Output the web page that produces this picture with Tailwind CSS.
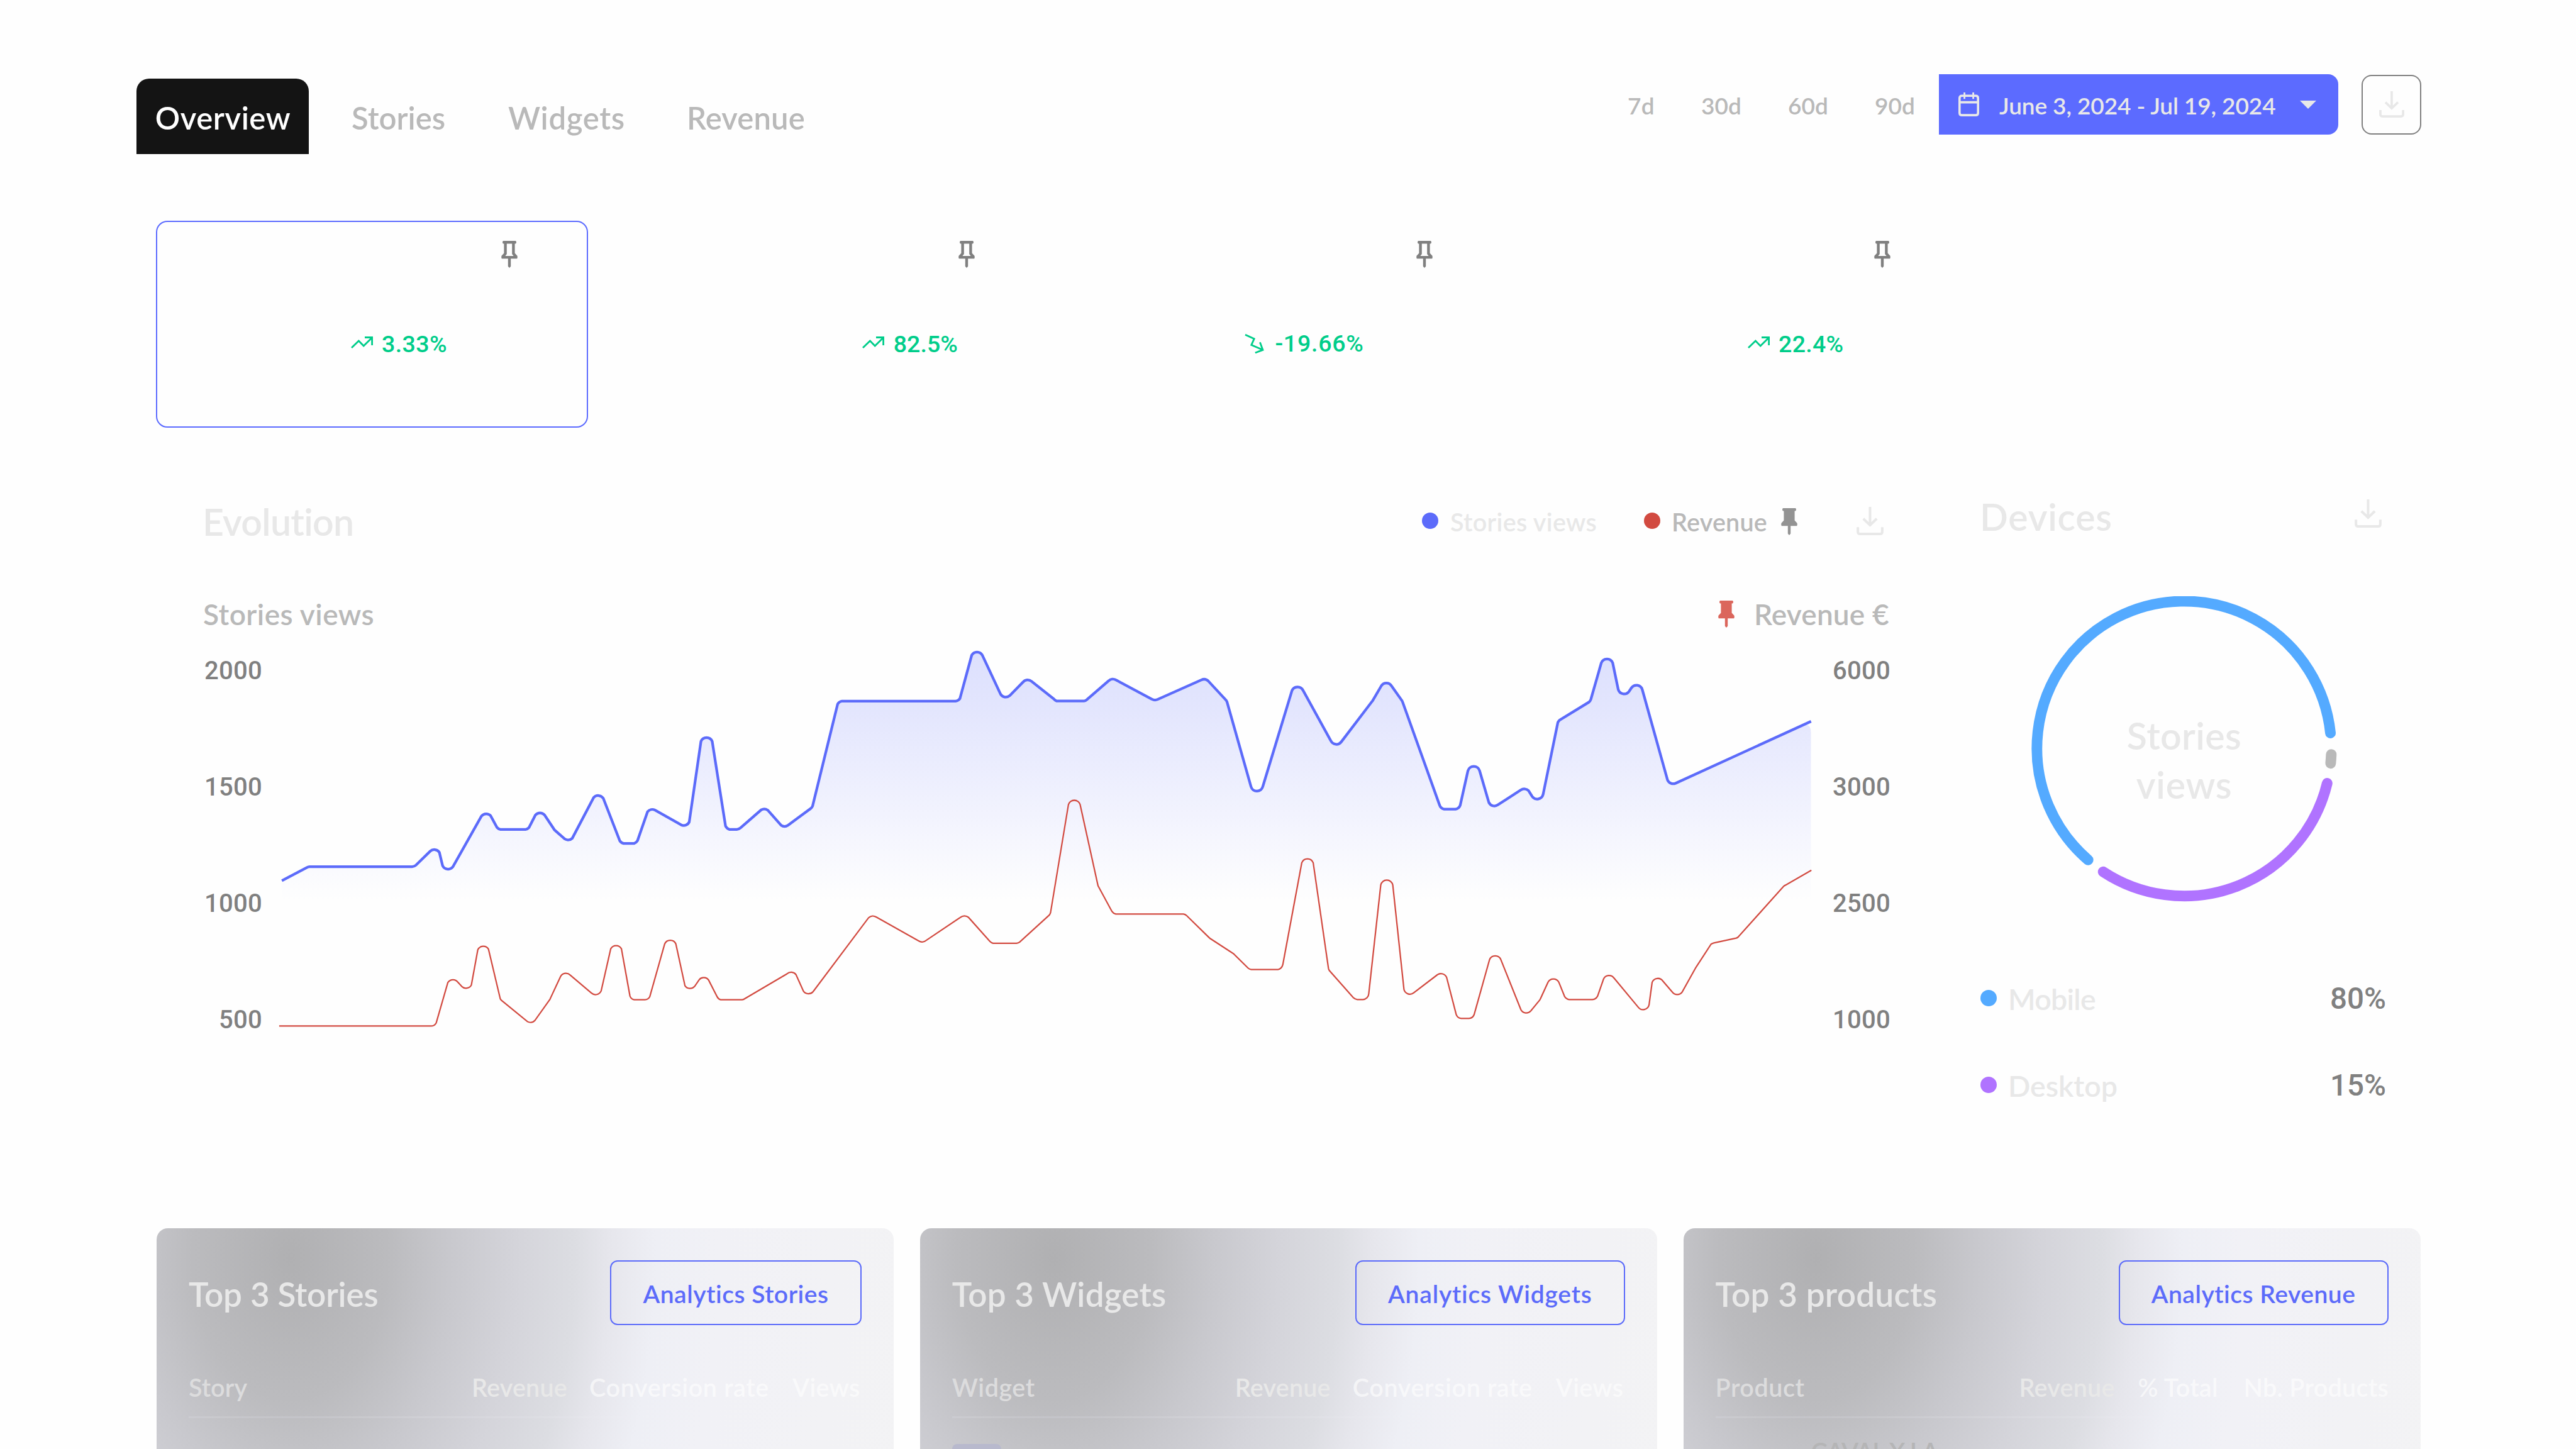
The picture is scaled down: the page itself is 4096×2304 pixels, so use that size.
<!DOCTYPE html>
<html lang="en">
<head>
<meta charset="utf-8">
<title>Analytics overview</title>
<script src="https://cdn.jsdelivr.net/npm/@tailwindcss/browser@4"></script>
</head>
<body class="w-[4096px] h-[2304px] overflow-hidden bg-[#fefefe] font-['Lato',sans-serif] font-semibold whitespace-nowrap">

<!-- icon sprite -->
<svg class="hidden">
  <symbol id="pin" viewBox="0 0 25.6 43"><path fill="currentColor" fill-rule="evenodd" d="M2.8 0H22.8Q23.8 1 23.8 2.3T22.8 4.6H21.4V19.6L25.3 23.7Q25.6 25 25.6 26T25 28.3H15V40.5L12.8 43 10.6 40.5V28.3H.6Q0 27 0 26T.3 23.7L4.2 19.6V4.6H2.8Q1.8 3.6 1.8 2.3T2.8 0ZM8.6 4.6V21L6.2 23.9H19.4L17 21V4.6Z"/></symbol>
  <symbol id="pin-solid" viewBox="0 0 25.6 43"><path fill="currentColor" d="M2.8 0H22.8Q23.8 1 23.8 2.3T22.8 4.6H21.4V19.6L25.3 23.7Q25.6 25 25.6 26T25 28.3H15V40.5L12.8 43 10.6 40.5V28.3H.6Q0 27 0 26T.3 23.7L4.2 19.6V4.6H2.8Q1.8 3.6 1.8 2.3T2.8 0Z"/></symbol>
  <symbol id="download" viewBox="0 0 42.7 45"><path fill="none" stroke="currentColor" stroke-width="4" d="M21.3 0V29M10.6 18.8L21.3 29 32 18.8M2 32.2V39.5Q2 43 5.5 43H37.2Q40.7 43 40.7 39.5V32.2"/></symbol>
  <symbol id="up" viewBox="0 0 35 19"><path fill="none" stroke="currentColor" stroke-width="2.8" d="M1 18L12.4 7 20.2 15 33.4 2M22 1.5H33.6V14"/></symbol>
  <symbol id="down" viewBox="0 0 31 31"><path fill="none" stroke="currentColor" stroke-width="2.8" d="M1 1.2L15.2 7.6 10.8 17.6 28.8 25.2M24.4 13.3L29 25.4 16.8 30"/></symbol>
  <symbol id="calendar" viewBox="0 0 33 38"><path fill="none" stroke="currentColor" stroke-width="3.6" d="M5.5 5.3H27.5Q31.2 5.3 31.2 9V32.4Q31.2 36.1 27.5 36.1H5.5Q1.8 36.1 1.8 32.4V9Q1.8 5.3 5.5 5.3ZM1.8 15.6H31.2"/><path stroke="currentColor" stroke-width="2.8" d="M9.6 0V10.2M23.6 0V10.2"/></symbol>
</svg>

<!-- top bar -->
<header class="flex items-start h-[245px] pt-[118px] pl-[217px]">
  <nav class="flex h-[120px] mt-[7px] text-[49px] text-[#b9b9b9]">
    <a class="flex items-center justify-center w-[274px] pt-[5px] pl-[1px] rounded-t-[20px] bg-[#141414] text-white tracking-[0.012em]">Overview</a>
    <a class="flex items-center w-[249px] pt-[5px] ml-[68px] tracking-[0.001em]">Stories</a>
    <a class="flex items-center w-[284px] pt-[5px] tracking-[0.014em]">Widgets</a>
    <a class="flex items-center w-[189px] pt-[5px] tracking-[0.003em]">Revenue</a>
  </nav>
  <div class="flex items-center h-[96px] ml-[1307px] text-[37px] text-[#b9b9b9]">
    <span class="w-[117px] pt-[3px] tracking-[0.01em]">7d</span>
    <span class="w-[138px] pt-[3px]">30d</span>
    <span class="w-[138px] pt-[3px]">60d</span>
    <span class="w-[102px] pt-[3px]">90d</span>
    <button class="flex items-center w-[635px] h-[96px] pl-[31px] rounded-r-2xl bg-[#5c6bff] text-[#e8e8e8]">
      <svg class="w-[33px] h-[38px]"><use href="#calendar"/></svg>
      <span class="ml-[32px] w-[445px] pt-[3px] text-left tracking-[-0.003em]">June 3, 2024 - Jul 19, 2024</span>
      <svg class="w-[26px] h-[13px] ml-[33px]" viewBox="0 0 26 13"><path fill="currentColor" d="M0 0H26L13 13Z"/></svg>
    </button>
    <button class="flex items-center justify-center w-[95px] h-[95px] ml-[37px] rounded-2xl border-[2.4px] border-[#808080] text-[#e8e8e8]">
      <svg class="w-[40px] h-[42px]"><use href="#download"/></svg>
    </button>
  </div>
</header>

<!-- metric tiles -->
<section class="grid grid-cols-[repeat(4,687px)] gap-x-[40.7px] mt-[106px] ml-[248px] h-[329px] text-[37.5px] font-medium font-['Roboto',sans-serif]">
  <div class="rounded-[18px] border-2 border-[#5c6bff] pt-[30px] pl-[308px]">
    <svg class="w-[26px] h-[43px] ml-[239px] text-[#808080]"><use href="#pin"/></svg>
    <div class="flex items-center h-[44px] mt-[99px] text-[#00cd8a]"><svg class="w-[35px] h-[19px] mt-[-5px]"><use href="#up"/></svg><span class="ml-[14px] tracking-[0.011em]">3.33%</span></div>
  </div>
  <div class="pt-[32px] pl-[395px]">
    <svg class="w-[26px] h-[43px] ml-[153px] text-[#808080]"><use href="#pin"/></svg>
    <div class="flex items-center h-[44px] mt-[99px] text-[#00cd8a]"><svg class="w-[35px] h-[19px] mt-[-5px]"><use href="#up"/></svg><span class="ml-[15px] tracking-[0.002em]">82.5%</span></div>
  </div>
  <div class="pt-[32px] pl-[276px]">
    <svg class="w-[26px] h-[43px] ml-[273px] text-[#808080]"><use href="#pin"/></svg>
    <div class="flex items-center h-[44px] mt-[98px] text-[#00cd8a]"><svg class="w-[31px] h-[31px]"><use href="#down"/></svg><span class="ml-[17px] tracking-[0.02em]">-19.66%</span></div>
  </div>
  <div class="pt-[32px] pl-[348px]">
    <svg class="w-[26px] h-[43px] ml-[201px] text-[#808080]"><use href="#pin"/></svg>
    <div class="flex items-center h-[44px] mt-[99px] text-[#00cd8a]"><svg class="w-[35px] h-[19px] mt-[-5px]"><use href="#up"/></svg><span class="ml-[14px] tracking-[0.007em]">22.4%</span></div>
  </div>
</section>

<main class="flex mt-[90px] ml-[322px] h-[1183px]">
  <!-- evolution chart -->
  <section class="w-[2684px] pt-[8px]">
    <div class="flex items-center h-[100px] text-[39.5px]">
      <h2 class="flex-1 pt-[4px] text-[59px] text-[#e8e8e8] tracking-[-0.012em]">Evolution</h2>
      <i class="size-[26px] rounded-full bg-[#5c6bfa]"></i>
      <span class="w-[308px] pt-[3px] ml-[19px] text-[#e8e8e8] tracking-[0.009em]">Stories views</span>
      <i class="size-[26px] rounded-full bg-[#d24a40]"></i>
      <span class="w-[155px] pt-[3px] ml-[18px] text-[#b9b9b9] tracking-[0.005em]">Revenue</span>
      <svg class="w-[26px] h-[43px] mt-[3px] ml-[19px] text-[#939393]"><use href="#pin-solid"/></svg>
      <svg class="w-[43px] h-[45px] mt-[1px] ml-[94px] mr-[11px] text-[#e8e8e8]"><use href="#download"/></svg>
    </div>
    <div class="flex items-center h-[70px] mt-[62px] text-[46px] text-[#b9b9b9]">
      <span class="flex-1 pt-[2px] pl-[1px] tracking-[0.01em]">Stories views</span>
      <svg class="w-[26px] h-[43px] mt-[3px] text-[#db665c]"><use href="#pin-solid"/></svg>
      <span class="w-[217px] pt-[2px] ml-[31px] tracking-[0.003em]">Revenue €</span>
    </div>
    <div class="flex text-[40px] leading-[60px] text-[#808080] font-medium font-['Roboto',sans-serif] tracking-[0.007em]">
      <div class="flex flex-col justify-between items-end w-[95px] h-[615px] mt-[27px]"><span>2000</span><span>1500</span><span>1000</span><span>500</span></div>
      <svg id="chart" class="w-[2480px] h-[640px] ml-[13px]" viewBox="839.84 1972.66 4843.75 1250" fill="none">
        <defs><linearGradient id="fade" gradientUnits="userSpaceOnUse" x1="0" y1="2010" x2="0" y2="2800"><stop stop-color="#5c6bfa" stop-opacity=".21"/><stop offset=".25" stop-color="#5c6bfa" stop-opacity=".165"/><stop offset="1" stop-color="#5c6bfa" stop-opacity="0"/></linearGradient></defs>
        <path id="area" fill="url(#fade)"/>
        <path id="views" stroke="#5c6bfa" stroke-width="8.3"/>
        <path id="revenue" stroke="#d24a40" stroke-width="4.4"/>
      </svg>
      <div class="flex flex-col justify-between items-end w-[96px] h-[615px] mt-[27px]"><span>6000</span><span>3000</span><span>2500</span><span>1000</span></div>
    </div>
  </section>

  <!-- devices -->
  <section class="w-[646px] ml-[142px]">
    <div class="flex items-center justify-between h-[100px]">
      <h2 class="pt-[5px] text-[59px] text-[#e8e8e8] tracking-[0.013em]">Devices</h2>
      <svg class="w-[43px] h-[45px] mt-[-8px] mr-[7px] text-[#e8e8e8]"><use href="#download"/></svg>
    </div>
    <div class="relative w-[486px] h-[486px] mt-[78px] ml-[82px]">
      <svg class="size-full" viewBox="6309.4 1851.1 949.2 949.2" fill="none" stroke-width="33" stroke-linecap="round">
        <path stroke="#54aaff" d="M6485.6 2670A457 457 0 1 1 7238.2 2276"/>
        <path stroke="#b9b9b9" d="M7240.7 2342.5A457 457 0 0 1 7238.8 2370"/>
        <path stroke="#b073ff" d="M7228 2432A457 457 0 0 1 6532.5 2707"/>
      </svg>
      <p class="absolute inset-0 pt-[183px] text-center text-[59px] leading-[77.7px] text-[#e8e8e8]"><span class="tracking-[0.007em]">Stories</span><br><span class="tracking-[0.013em]">views</span></p>
    </div>
    <div class="flex items-center h-[60px] mt-[123px] text-[46.5px] text-[#e8e8e8]">
      <i class="size-[26px] ml-px rounded-full bg-[#54aaff]"></i><span class="flex-1 pt-[3px] ml-[18px] tracking-[-0.015em]">Mobile</span>
      <span class="mt-[4px] text-[47.5px] text-[#808080] font-medium font-['Roboto',sans-serif]">80%</span>
    </div>
    <div class="flex items-center h-[60px] mt-[78px] text-[46.5px] text-[#e8e8e8]">
      <i class="size-[26px] ml-px rounded-full bg-[#b073ff]"></i><span class="flex-1 pt-[3px] ml-[18px]">Desktop</span>
      <span class="mt-[4px] text-[47.5px] text-[#808080] font-medium font-['Roboto',sans-serif]">15%</span>
    </div>
  </section>
</main>

<!-- top 3 lists -->
<section class="grid grid-cols-[repeat(3,1172px)] gap-x-[41.8px] ml-[249px] h-[370px] text-[39.5px] text-white/60">
  <article class="rounded-t-[18px] pt-[51px] px-[51px] bg-[radial-gradient(ellipse_620px_900px_at_212px_48px,#b0b0b2_0%,#bbbbbe_25%,#c8c8cd_41%,#d4d4da_58%,#dcdde2_73%,#e6e6ec_82%,#eeeff5_94%,#f1f1f6_110%,#f3f3f4_170%)]">
    <div class="flex items-center justify-between h-[103px]">
      <h3 class="pt-[4px] text-[53px] text-[#e8e8e8] tracking-[-0.003em]">Top 3 Stories</h3>
      <button class="w-[400px] h-[103px] pt-[3px] rounded-xl border-2 border-[#5c6bfa] text-[39px] text-[#5c6bfa] tracking-[0.014em]">Analytics Stories</button>
    </div>
    <div class="flex items-center h-[99px] pt-[4px] mt-[49px] border-b-3 border-[#f3f3f8]/15">
      <span class="flex-1 text-[#dcdcdd] tracking-[0.002em]">Story</span>
      <span class="w-[187px] text-[#e8e8e8] tracking-[0.005em]">Revenue</span>
      <span class="w-[323px] tracking-[0.016em]">Conversion rate</span>
      <span class="w-[110px] tracking-[0.007em]">Views</span>
    </div>
  </article>
  <article class="rounded-t-[18px] pt-[51px] px-[51px] bg-[radial-gradient(ellipse_620px_900px_at_212px_48px,#b0b0b2_0%,#bbbbbe_25%,#c8c8cd_41%,#d4d4da_58%,#dcdde2_73%,#e6e6ec_82%,#eeeff5_94%,#f1f1f6_110%,#f3f3f4_170%)]">
    <div class="flex items-center justify-between h-[103px]">
      <h3 class="pt-[4px] text-[53px] text-[#e8e8e8] tracking-[0.004em]">Top 3 Widgets</h3>
      <button class="w-[429px] h-[103px] pt-[3px] rounded-xl border-2 border-[#5c6bfa] text-[39px] text-[#5c6bfa] tracking-[0.02em]">Analytics Widgets</button>
    </div>
    <div class="flex items-center h-[99px] pt-[4px] mt-[49px] border-b-3 border-[#f3f3f8]/15">
      <span class="flex-1 text-[#dcdcdd] tracking-[0.013em]">Widget</span>
      <span class="w-[187px] text-[#e8e8e8] tracking-[0.005em]">Revenue</span>
      <span class="w-[323px] tracking-[0.016em]">Conversion rate</span>
      <span class="w-[110px] tracking-[0.007em]">Views</span>
    </div>
    <div class="w-[78px] h-[78px] mt-[41px] rounded-lg bg-[#b8b9cd]"></div>
  </article>
  <article class="rounded-t-[18px] pt-[51px] px-[51px] bg-[radial-gradient(ellipse_620px_900px_at_212px_48px,#b0b0b2_0%,#bbbbbe_25%,#c8c8cd_41%,#d4d4da_58%,#dcdde2_73%,#e6e6ec_82%,#eeeff5_94%,#f1f1f6_110%,#f3f3f4_170%)]">
    <div class="flex items-center justify-between h-[103px]">
      <h3 class="pt-[4px] text-[53px] text-[#e8e8e8] tracking-[0.005em]">Top 3 products</h3>
      <button class="w-[429px] h-[103px] pt-[3px] rounded-xl border-2 border-[#5c6bfa] text-[39px] text-[#5c6bfa] tracking-[0.013em]">Analytics Revenue</button>
    </div>
    <div class="flex items-center h-[99px] pt-[4px] mt-[49px] border-b-3 border-[#f3f3f8]/15">
      <span class="flex-1 text-[#dcdcdd] tracking-[0.014em]">Product</span>
      <span class="w-[189px] text-[#e8e8e8] tracking-[0.005em]">Revenue</span>
      <span class="w-[168px] tracking-[0.006em]">% Total</span>
      <span class="w-[230px] tracking-[0.008em]">Nb. Products</span>
    </div>
    <p class="ml-[152px] mt-[29px] text-[39.5px] leading-[48px] text-[#b5b5b6] tracking-[-0.035em]">CAVAL X LA</p>
  </article>
</section>

<script>
const W = { a: [600, 1500, 1.6582, 1.148], b: [3100, 1950, .8291, .8291], c: [4400, 1950, .9566, .8291] };
const VIEWS = {
  a: [166,1076,213,1040, 218,1038,410,1038, 417,1034,444,996, 461,999,467,1035, 486,1039,540,901, 557,900,569,932, 575,937,623,937, 629,932,641,898, 658,898,676,937, 677,939,696,963, 710,961,750,851, 768,853,799,968, 806,975,826,975, 832,968,851,889, 865,885,914,925, 929,917,951,699, 972,699,997,928, 1004,937,1018,937, 1025,933,1064,884, 1076,885,1101,926, 1114,926,1157,880, 1160,874,1207,598, 1215,590,1428,590, 1436,583,1458,466, 1478,466,1512,571],
  b: [43,254,93,203, 125,200,208,266, 219,274,321,274, 333,268,414,198, 441,195,576,267, 597,268,761,195, 787,199,853,270, 857,277,947,595, 991,595,1100,236, 1142,234,1246,423, 1285,427,1400,276, 1403,272,1435,217, 1473,217,1512,272],
  c: [-46,278,74,664, 89,679,126,679, 141,664,166,535, 204,535,234,654, 263,663,338,607, 363,610,375,632, 410,624,458,354, 463,346,559,278, 565,268,599,131, 636,131,654,231, 689,238,697,224, 732,231,814,570, 840,582,1280,350]
};
const REVENUE = {
  a: [161,1469,445,1469, 455,1461,477,1351, 496,1351,503,1362, 521,1358,533,1263, 553,1261,575,1395, 577,1399,626,1457, 640,1454,668,1397, 669,1394,688,1335, 706,1331,746,1380, 764,1374,782,1260, 802,1260,818,1388, 826,1398,846,1398, 855,1390,883,1247, 904,1247,921,1360, 939,1362,948,1343, 965,1344,981,1389, 988,1398,1028,1398, 1033,1395,1112,1328, 1129,1330,1143,1375, 1161,1376,1265,1176, 1279,1174,1359,1239, 1370,1240,1437,1175, 1452,1175,1492,1240, 1498,1245,1542,1245],
  b: [80,1177,191,1076, 196,1067,263,662, 307,662,373,962, 375,968,426,1062, 440,1072,694,1072, 705,1077,790,1160, 793,1163,878,1218, 884,1223,936,1274, 948,1280,1044,1280, 1066,1262,1137,880, 1180,880,1237,1275, 1240,1283,1330,1385, 1345,1392,1366,1392, 1388,1370,1433,963, 1478,963,1520,1355],
  c: [-10,1367,66,1300, 97,1310,128,1448, 144,1463,169,1463, 186,1449,236,1243, 273,1243,338,1430, 370,1435,399,1394, 401,1390,426,1327, 461,1327,480,1381, 495,1392,570,1392, 587,1379,606,1316, 640,1311,719,1421, 754,1412,764,1328, 799,1323,830,1365, 861,1365,904,1276, 905,1274,955,1185, 964,1180,1037,1162, 1044,1157,1190,969, 1196,964,1281,908]
};
function line(series) {
  const runs = Object.entries(series).flatMap(([k, v]) => {
    const [ox, oy, sx, sy] = W[k], out = [];
    for (let i = 0; i < v.length; i += 4) out.push([ox + v[i] * sx, oy + v[i + 1] * sy, ox + v[i + 2] * sx, oy + v[i + 3] * sy]);
    return out;
  });
  let d = '', p = null;
  for (const r of runs) {
    const turn = p && (p[2] - p[0]) * (r[3] - r[1]) - (p[3] - p[1]) * (r[2] - r[0]) > 0 ? 1 : 0;
    d += (p ? `A19 19 0 0 ${turn} ` : 'M') + `${r[0].toFixed(1)} ${r[1].toFixed(1)}L${r[2].toFixed(1)} ${r[3].toFixed(1)}`;
    p = r;
  }
  return d;
}
const views = line(VIEWS);
document.getElementById('views').setAttribute('d', views);
document.getElementById('area').setAttribute('d', views.replace(/L[^L]*$/, 'L5608 2250Q5624 2252 5624 2275') + 'V2812H875Z');
document.getElementById('revenue').setAttribute('d', line(REVENUE));
</script>
</body>
</html>
